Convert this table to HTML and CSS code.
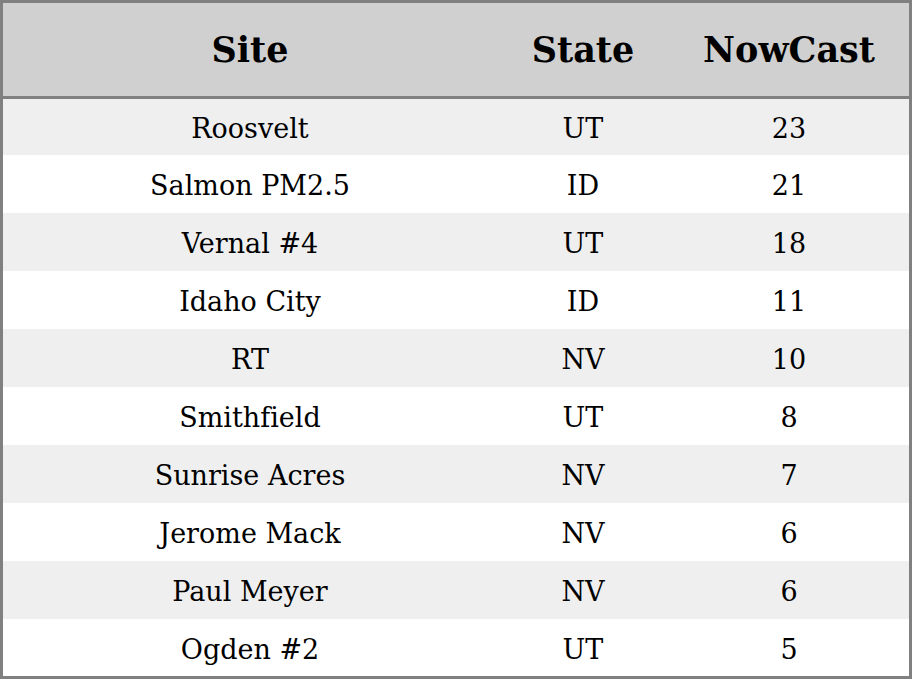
FILE: index.html
```html
<!DOCTYPE html>
<html>
<head>
<meta charset="utf-8">
<link rel="stylesheet" href="styles.css">
</head>
<body>
<table class="aq-table">
  <colgroup>
    <col class="col-site">
    <col class="col-state">
    <col class="col-now">
  </colgroup>
  <thead>
    <tr><th>Site</th><th>State</th><th>NowCast</th></tr>
  </thead>
  <tbody>
    <tr><td>Roosvelt</td><td>UT</td><td>23</td></tr>
    <tr><td>Salmon PM2.5</td><td>ID</td><td>21</td></tr>
    <tr><td>Vernal #4</td><td>UT</td><td>18</td></tr>
    <tr><td>Idaho City</td><td>ID</td><td>11</td></tr>
    <tr><td>RT</td><td>NV</td><td>10</td></tr>
    <tr><td>Smithfield</td><td>UT</td><td>8</td></tr>
    <tr><td>Sunrise Acres</td><td>NV</td><td>7</td></tr>
    <tr><td>Jerome Mack</td><td>NV</td><td>6</td></tr>
    <tr><td>Paul Meyer</td><td>NV</td><td>6</td></tr>
    <tr><td>Ogden #2</td><td>UT</td><td>5</td></tr>
  </tbody>
</table>
</body>
</html>
```

FILE: styles.css
```css
html, body {
  margin: 0;
  padding: 0;
  background: #ffffff;
}

.aq-table {
  width: 912px;
  border-collapse: separate;
  border-spacing: 0;
  border: 3px solid #808080;
  table-layout: fixed;
  font-family: "DejaVu Serif", serif;
  font-variant-ligatures: none;
  color: #000;
}

.col-site { width: 494px; }
.col-state { width: 172px; }
.col-now { width: 240px; }

.aq-table th {
  height: 93px;
  padding: 0;
  background: #d0d0d0;
  font-size: 35px;
  font-weight: bold;
  text-align: center;
  vertical-align: middle;
  border-bottom: 3px solid #808080;
}

.aq-table td {
  height: 55px;
  padding: 3px 0 0;
  font-size: 27px;
  text-align: center;
  vertical-align: middle;
}

.aq-table tbody tr:first-child td {
  height: 53px;
}

.aq-table tbody tr:last-child td {
  height: 54px;
}

.aq-table tbody tr:nth-child(odd) td {
  background: #efefef;
}

.aq-table tbody tr:nth-child(even) td {
  background: #ffffff;
}
```
